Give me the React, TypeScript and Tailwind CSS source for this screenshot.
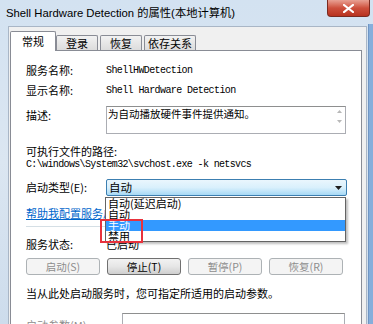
const cjk = "font-['Noto_Sans_CJK_SC','Noto_Sans',sans-serif]";
const mono = "font-['Liberation_Mono','Noto_Sans_CJK_SC',monospace]";

function Tab({ label, active, width }: { label: string; active?: boolean; width: string }) {
  return active ? (
    <div className={`${width} h-[20px] -mb-px relative z-10 bg-white border border-b-0 border-[#898c95] rounded-t-[2px] flex items-center justify-center text-[11px] text-black`}>
      {label}
    </div>
  ) : (
    <div className={`${width} h-[15px] mt-[4px] bg-gradient-to-b from-[#f2f2f2] to-[#dcdcdc] border border-b-0 border-[#898c95] rounded-t-[2px] flex items-center justify-center text-[11px] text-black`}>
      {label}
    </div>
  );
}

function Btn({ label, disabled }: { label: string; disabled?: boolean }) {
  return (
    <div
      className={
        disabled
          ? "w-[74px] h-[17px] rounded-[3px] border border-[#adb2b5] bg-[#f4f4f4] flex items-center justify-center text-[10.5px] text-[#8d8d8d]"
          : "w-[74px] h-[17px] rounded-[3px] border border-[#707070] bg-gradient-to-b from-[#f2f2f2] via-[#e6e6e6] to-[#cfcfcf] flex items-center justify-center text-[10.5px] text-black"
      }
    >
      {label}
    </div>
  );
}

export default function App() {
  return (
    <div className={`w-[373px] h-[324px] overflow-hidden relative bg-gradient-to-b from-[#d3e2f1] via-[#dbe6f1] to-[#cddcec] ${cjk}`}>
      {/* title bar */}
      <div className="h-[26px] pl-[6px] pt-[5px] text-[11.3px] leading-[16px] text-black font-['Liberation_Sans','Noto_Sans_CJK_SC',sans-serif]">
        Shell Hardware Detection 的属性(本地计算机)
      </div>
      <div className="absolute right-[3px] top-0 w-[43px] h-[17px] rounded-b-[4px] border border-t-0 border-[#7a2a20] bg-gradient-to-b from-[#e8a093] via-[#cd4f3c] to-[#b8321f] flex items-center justify-center">
        <svg width="11" height="9" viewBox="0 0 11 9">
          <path d="M1 1 L10 8 M10 1 L1 8" stroke="#fff" strokeWidth="2.2" strokeLinecap="square" />
        </svg>
      </div>
      <div className="absolute right-0 top-[24px] bottom-0 w-[5px] bg-[#86aedb] border-l border-[#6f95c4]" />

      {/* dialog body */}
      <div className="ml-[8px] mr-[6px] h-[298px] bg-[#f0f0f0] border-l border-t border-r border-[#a9b6c6] pl-[1px]">
        <div className="flex items-end pt-[4px] h-[23px]">
          <Tab label="常规" active width="w-[46px]" />
          <Tab label="登录" width="w-[42px]" />
          <div className="w-[2px]" />
          <Tab label="恢复" width="w-[42px]" />
          <div className="w-[2px]" />
          <Tab label="依存关系" width="w-[52px]" />
        </div>

        {/* tab panel */}
        <div className="relative w-[352px] h-[280px] bg-white border border-[#898c95] pl-[15px] text-[11px] text-black">
          <div className="h-[12px]" />
          <div className="flex items-center h-[14px]">
            <span className="w-[80px]">服务名称:</span>
            <span className={`${mono} text-[10px] tracking-[-0.6px]`}>ShellHWDetection</span>
          </div>
          <div className="h-[6px]" />
          <div className="flex items-center h-[14px]">
            <span className="w-[80px]">显示名称:</span>
            <span className={`${mono} text-[10px] tracking-[-0.6px]`}>Shell Hardware Detection</span>
          </div>
          <div className="h-[9px]" />
          <div className="flex h-[28px]">
            <span className="w-[80px] pt-[1px]">描述:</span>
            <div className="w-[240px] h-[28px] border border-[#abadb3] border-t-[#8e8f8f] flex">
              <div className="flex-1 pl-[1px] leading-[13px] text-[10.5px]">为自动播放硬件事件提供通知。</div>
              <div className="w-[11px] flex flex-col items-center pt-[3px] gap-[7px]">
                <svg width="5" height="3" viewBox="0 0 5 3"><path d="M0 3 L2.5 0 L5 3 Z" fill="#b8b8b8" /></svg>
                <svg width="5" height="3" viewBox="0 0 5 3"><path d="M0 0 L2.5 3 L5 0 Z" fill="#b8b8b8" /></svg>
              </div>
            </div>
          </div>
          <div className="h-[10px]" />
          <div className="h-[14px] flex items-center">可执行文件的路径:</div>
          <div className={`h-[12px] flex items-center ${mono} text-[10px] tracking-[-0.64px]`}>C:\windows\System32\svchost.exe -k netsvcs</div>
          <div className="h-[9px]" />
          <div className="flex items-center h-[17px]">
            <span className="w-[80px]">启动类型(E):</span>
            <div className="w-[241px] h-[17px] border border-[#3c7fb1] rounded-[2px] bg-gradient-to-b from-[#eaf6fd] via-[#d9f0fc] to-[#a7d9f5] flex items-center pl-[2px] pr-[4px]">
              <span className="flex-1 text-[11.5px]">自动</span>
              <svg width="7" height="4" viewBox="0 0 7 4"><path d="M0 0 L7 0 L3.5 4 Z" fill="#1e1e1e" /></svg>
            </div>
          </div>
          <div className="h-[10px]" />
          <div className="h-[14px] flex items-center">
            <span className="text-[#0066cc] underline">帮助我配置服务启动选项。</span>
          </div>
          <div className="h-[6px]" />
          <div className="w-[320px] h-[2px] border-t border-[#d5dfe5] border-b border-b-white" />
          <div className="h-[9px]" />
          <div className="flex items-center h-[14px]">
            <span className="w-[80px]">服务状态:</span>
            <span>已启动</span>
          </div>
          <div className="h-[7px]" />
          <div className="flex gap-[7px]">
            <Btn label="启动(S)" disabled />
            <Btn label="停止(T)" />
            <Btn label="暂停(P)" disabled />
            <Btn label="恢复(R)" disabled />
          </div>
          <div className="h-[11px]" />
          <div className="h-[14px] flex items-center">当从此处启动服务时，您可指定所适用的启动参数。</div>
          <div className="h-[13px]" />
          <div className="flex items-start">
            <span className="w-[96px] pt-[4px] text-[#8d8d8d]">启动参数(M):</span>
            <div className="w-[223px] h-[18px] border border-[#abadb3] border-t-[#8e8f8f]" />
          </div>

          {/* open dropdown list */}
          <div className="absolute left-[94px] top-[146px] w-[241px] h-[45px] bg-white border border-[#646464] shadow-[2px_2px_2px_rgba(0,0,0,0.25)] text-[11px] leading-[11px]">
            <div className="h-[11px] pl-[2px]">自动(延迟启动)</div>
            <div className="h-[11px] pl-[2px]">自动</div>
            <div className="h-[11px] pl-[2px] bg-[#3399ff] text-white">手动</div>
            <div className="h-[11px] pl-[2px]">禁用</div>
          </div>
          <div className="absolute left-[89px] top-[168px] w-[43px] h-[24px] border-2 border-[#e8323c]" />
        </div>
      </div>
    </div>
  );
}
